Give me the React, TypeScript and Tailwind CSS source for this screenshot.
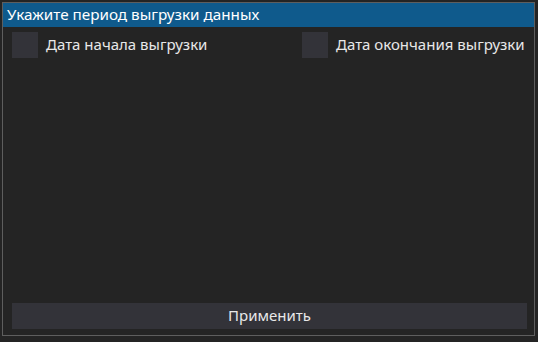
import React from "react";

export default function App() {
  const font = { fontFamily: '"Noto Sans", "Open Sans", sans-serif' };
  return (
    <div className="w-[538px] h-[342px] bg-[#242424] pt-[2px] pl-[2px] overflow-hidden" style={font}>
      <div className="w-[533px] h-[334px] border border-[#5e5e5e] flex flex-col bg-[#242424]">
        <div className="h-[24px] bg-[#0f5a8c] flex items-center pl-[4px] pb-[1px] text-[15.25px] text-white leading-none">
          Укажите период выгрузки данных
        </div>
        <div className="flex items-center mt-[5px] pl-[9px] h-[26px]">
          <div className="w-[290px] flex items-center">
            <div className="w-[26px] h-[26px] bg-[#333339]" />
            <span className="ml-[8px] pb-[1px] text-[15px] text-[#e8e8e8] leading-none">Дата начала выгрузки</span>
          </div>
          <div className="w-[26px] h-[26px] bg-[#333339]" />
          <span className="ml-[8px] pb-[1px] text-[15px] text-[#e8e8e8] leading-none">Дата окончания выгрузки</span>
        </div>
        <div className="flex-1" />
        <div className="ml-[9px] mb-[6px] w-[515px] h-[26px] bg-[#333339] flex items-center justify-center pb-[2px] text-[15px] text-[#e8e8e8] leading-none">
          Применить
        </div>
      </div>
    </div>
  );
}
